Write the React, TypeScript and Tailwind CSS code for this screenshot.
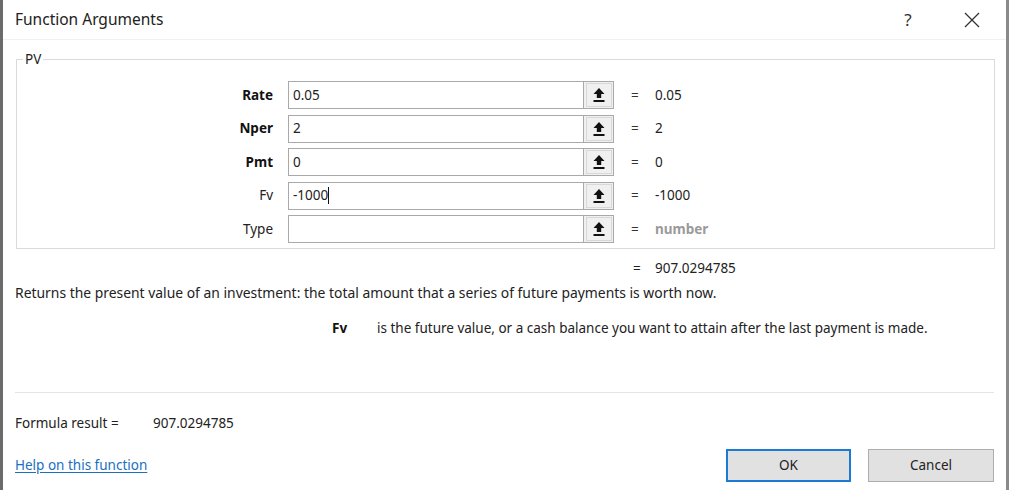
import React from "react";

const font = { fontFamily: '"Noto Sans", "Open Sans", sans-serif' };

function UpIcon() {
  return (
    <svg width="12" height="16" viewBox="0 0 12 16">
      <path d="M6 1 L11.5 7 L8.2 7 L8.2 11 L3.8 11 L3.8 7 L0.5 7 Z" fill="#111" />
      <rect x="0.5" y="13" width="11" height="2" fill="#111" />
    </svg>
  );
}

type Row = { label: string; bold: boolean; value: string; result: string; gray?: boolean; caret?: boolean };

const rows: Row[] = [
  { label: "Rate", bold: true, value: "0.05", result: "0.05" },
  { label: "Nper", bold: true, value: "2", result: "2" },
  { label: "Pmt", bold: true, value: "0", result: "0" },
  { label: "Fv", bold: false, value: "-1000", result: "-1000", caret: true },
  { label: "Type", bold: false, value: "", result: "number", gray: true },
];

export default function App() {
  return (
    <div
      className="w-[1009px] h-[490px] bg-white text-[#1a1a1a] border-l-[3px] border-r-[3px] border-l-[#6b6b6b] border-r-[#8a8a8a] flex flex-col overflow-hidden"
      style={font}
    >
      <div className="h-[40px] flex items-center pl-[12px] border-b border-[#f0f0f0]">
        <div className="text-[15.5px] text-[#222] flex-1">Function Arguments</div>
        <div className="w-[40px] text-center text-[17px] text-[#333] mr-[36px]">?</div>
        <svg width="16" height="16" viewBox="0 0 16 16" className="mr-[26px]">
          <path d="M1 1 L15 15 M15 1 L1 15" stroke="#333" strokeWidth="1.3" />
        </svg>
      </div>

      <div className="flex-1 flex flex-col px-[12px]">
        <div className="relative mt-[19px] ml-[1px] w-[979px] h-[190px] border border-[#dadada]">
          <div className="absolute left-[6px] -top-[9px] bg-white px-[2px] text-[13.5px] leading-[16px] text-[#222]">PV</div>
          <div className="flex flex-col gap-[5.5px] pt-[21px]">
            {rows.map((r) => (
              <div key={r.label} className="flex items-center h-[28px]">
                <div className={`w-[271px] text-right text-[13.5px] pr-[15px] ${r.bold ? "font-bold text-[#111]" : "text-[#222]"}`}>
                  {r.label}
                </div>
                <div className="flex h-[28px] border border-[#a9a9a9] bg-white">
                  <div className="w-[294px] px-[4px] flex items-center text-[13.5px] text-[#222]">
                    {r.value}
                    {r.caret && <span className="inline-block w-[1px] h-[17px] bg-[#111]" />}
                  </div>
                  <div className="w-[30px] bg-[#f0f0f0] border-l border-[#a9a9a9] flex items-center justify-center">
                    <div className="w-[26px] h-[24px] border border-[#d8d8d8] flex items-center justify-center">
                      <UpIcon />
                    </div>
                  </div>
                </div>
                <div className="ml-[17px] w-[24px] text-[13.5px] text-[#333]">=</div>
                <div className={`text-[13.5px] ${r.gray ? "text-[#9a9a9a] font-bold" : "text-[#222]"}`}>{r.result}</div>
              </div>
            ))}
          </div>
        </div>

        <div className="flex mt-[9px] h-[20px] items-center text-[13.5px] text-[#222]">
          <div className="w-[618px]" />
          <div className="w-[22px]">=</div>
          <div>907.0294785</div>
        </div>
        <div className="mt-[5px] h-[20px] flex items-center text-[13.9px] text-[#222]">
          Returns the present value of an investment: the total amount that a series of future payments is worth now.
        </div>
        <div className="mt-[15px] h-[20px] flex items-center text-[13.5px] text-[#222]">
          <div className="w-[317px]" />
          <div className="font-bold w-[45px] text-[#111]">Fv</div>
          <div>is the future value, or a cash balance you want to attain after the last payment is made.</div>
        </div>

        <div className="mt-[54px] border-t border-[#e4e4e4] w-[979px]" />

        <div className="mt-[20px] h-[20px] flex items-center text-[13.5px] text-[#222]">
          <div className="w-[138px]">Formula result =</div>
          <div>907.0294785</div>
        </div>

        <div className="mt-[16px] flex items-center">
          <div className="flex-1 text-[13.5px] text-[#1a6fc0] underline underline-offset-2 self-end mb-[7px]">Help on this function</div>
          <div className="w-[125px] h-[33px] border-2 border-[#1a7ad4] bg-[#e1e1e1] flex items-center justify-center text-[13.5px] text-[#222]">
            OK
          </div>
          <div className="ml-[17px] w-[126px] h-[33px] border border-[#adadad] bg-[#e1e1e1] flex items-center justify-center text-[13.5px] text-[#222]">
            Cancel
          </div>
        </div>
      </div>
    </div>
  );
}
